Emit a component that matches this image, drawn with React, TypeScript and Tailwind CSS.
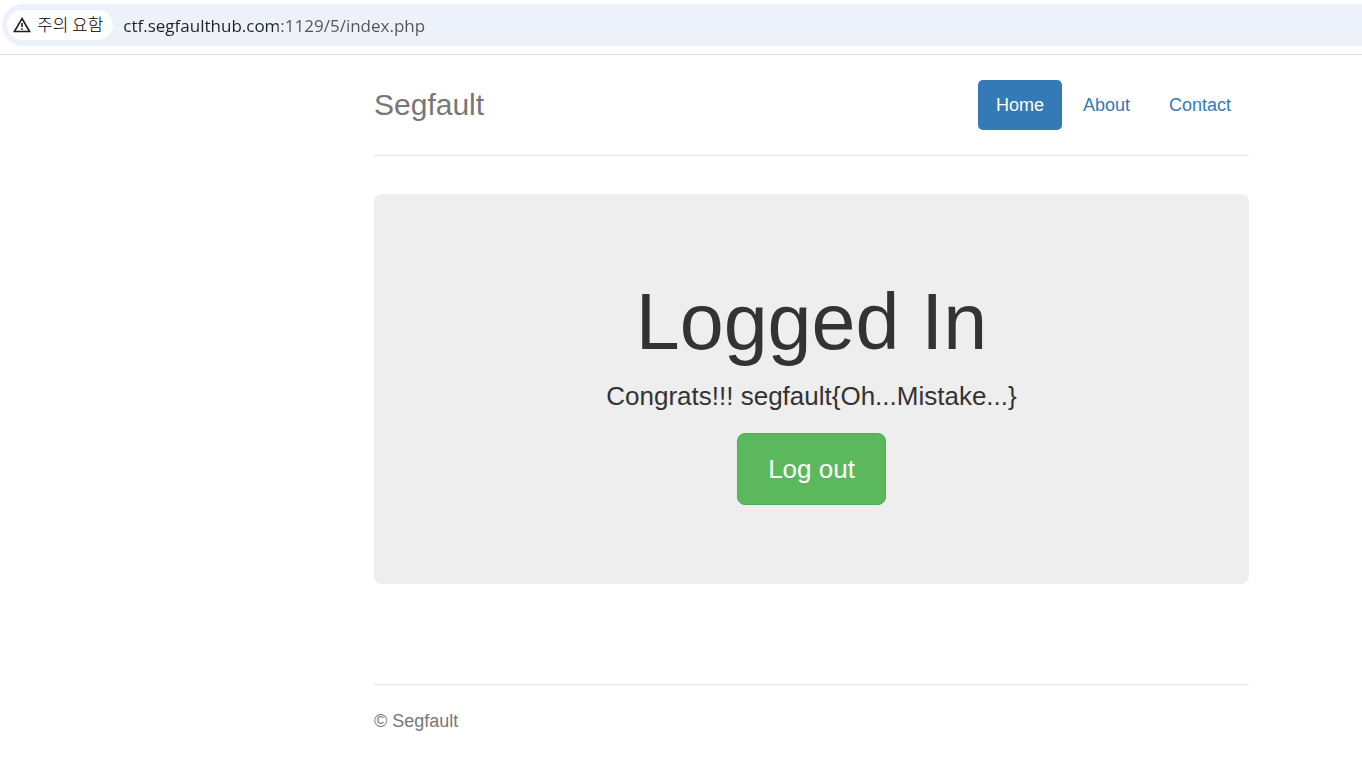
import React from "react";

const navItems = [
  { label: "About", href: "#about" },
  { label: "Contact", href: "#contact" },
];

function AddressBar() {
  return (
    <div className="border-b border-[#dcdfe3] pt-1 pb-2">
      <div className="ml-0.5 flex h-[42px] items-center rounded-l-full bg-[#edf1fa] pl-[5px] font-['Open_Sans','Noto_Sans_CJK_KR',sans-serif]">
        <button type="button" className="flex h-[30px] items-center gap-1.5 rounded-full bg-white pr-[10px] pl-1.5 font-['Noto_Sans_CJK_KR',sans-serif] text-[17px] leading-6 font-light text-black">
          <svg width="18" height="18" viewBox="0 0 18 18" fill="none" stroke="#1f1f1f" strokeWidth="1.6" aria-hidden="true">
            <path d="M9 2.5 16.6 15.5H1.4Z" />
            <path d="M9 7v4M9 12.2v1.6" />
          </svg>
          <span className="pb-0.5">주의 요함</span>
        </button>
        <input
          aria-label="Address"
          className="ml-[10px] h-[30px] min-w-0 flex-1 bg-[linear-gradient(90deg,#202124_155px,#50545a_155px)] bg-clip-text text-[17px] text-transparent caret-[#202124] outline-none"
          defaultValue="ctf.segfaulthub.com:1129/5/index.php"
        />
      </div>
    </div>
  );
}

export default function App() {
  return (
    <div className="min-h-screen bg-white font-['Liberation_Sans',Arial,sans-serif] text-[#333]">
      <AddressBar />
      <div className="ml-[374px] mr-[113px]">
        <header className="flex items-center justify-between border-b border-[#e5e5e5] py-[25px]">
          <h3 className="text-[30px] leading-[50px] text-[#777]">Segfault</h3>
          <nav className="flex gap-[3px] text-[18px] leading-[50px] text-[#337ab7]">
            <a href="#home" className="rounded-[5px] bg-[#337ab7] px-[18px] text-white">Home</a>
            {navItems.map((item) => (
              <a key={item.label} href={item.href} className="px-[18px]">{item.label}</a>
            ))}
          </nav>
        </header>
        <main className="mt-[38px] flex flex-col items-center rounded-lg bg-[#eee] pt-[84px] pb-[79px]">
          <h1 className="text-[79px] leading-[88px]">Logged In</h1>
          <p className="mt-3 text-[26px] leading-9">Congrats!!! segfault&#123;Oh...Mistake...&#125;</p>
          <button type="button" className="mt-[19px] h-[72px] rounded-lg border border-[#4cae4c] bg-[#5cb85c] px-[30px] text-[26px] text-white">Log out</button>
        </main>
        <footer className="mt-[100px] border-t border-[#e5e5e5] pt-6 text-[18px] leading-6 text-[#777]">
          <p>© Segfault</p>
        </footer>
      </div>
    </div>
  );
}
